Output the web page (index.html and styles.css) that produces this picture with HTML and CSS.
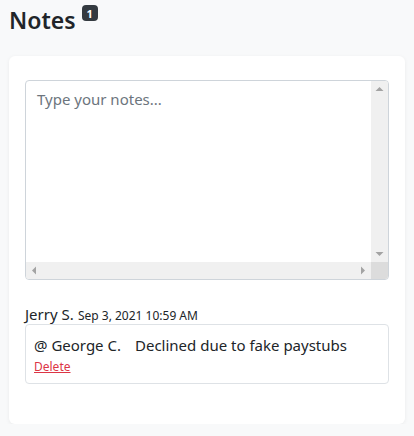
FILE: index.html
```html
<!DOCTYPE html>
<html lang="en">
<head>
<meta charset="utf-8">
<title>Notes</title>
<link rel="stylesheet" href="styles.css">
</head>
<body>
  <div class="page">
    <h4 class="title">Notes <span class="badge">1</span></h4>
    <div class="card">
      <div class="input-frame">
        <textarea class="notes-input" placeholder="Type your notes..."></textarea>
        <div class="vbar">
          <svg class="arrow" width="17" height="17" viewBox="0 0 17 17"><path d="M4.5 10L8.5 6L12.5 10Z" fill="#a3a3a3"/></svg>
          <svg class="arrow" width="17" height="17" viewBox="0 0 17 17"><path d="M4.5 7L8.5 11L12.5 7Z" fill="#a3a3a3"/></svg>
        </div>
        <div class="hbar">
          <svg class="arrow" width="17" height="17" viewBox="0 0 17 17"><path d="M10 4.5L6 8.5L10 12.5Z" fill="#a3a3a3"/></svg>
          <svg class="arrow" width="17" height="17" viewBox="0 0 17 17"><path d="M7 4.5L11 8.5L7 12.5Z" fill="#a3a3a3"/></svg>
        </div>
        <div class="corner"></div>
      </div>
      <div class="note">
        <div class="note-head"><span class="author">Jerry S.</span> <span class="date">Sep 3, 2021 10:59 AM</span></div>
        <div class="note-box">
          <div class="note-text"><span class="mention">@ George C.</span><span>Declined due to fake paystubs</span></div>
          <a class="delete" href="#">Delete</a>
        </div>
      </div>
    </div>
  </div>
</body>
</html>
```
FILE: styles.css
```css
html, body {
  margin: 0;
  padding: 0;
  background: #f8f9fa;
  font-family: "Noto Sans", "Open Sans", sans-serif;
  color: #212529;
}
.page {
  padding: 0 9px;
}
.title {
  margin: 0;
  padding-top: 6px;
  height: 56px;
  box-sizing: border-box;
  font-size: 23px;
  font-weight: 600;
  line-height: 28px;
  color: #212529;
  display: flex;
  align-items: flex-start;
  gap: 6px;
}
.badge {
  display: inline-flex;
  align-items: center;
  justify-content: center;
  width: 16px;
  height: 16px;
  margin-top: -1px;
  background: #343a40;
  color: #fff;
  border-radius: 4px;
  font-size: 11px;
  font-weight: 700;
  line-height: 1;
}
.card {
  background: #fff;
  border-radius: 6px;
  box-shadow: 0 1px 4px rgba(0,0,0,0.06);
  padding: 24px 16px 40px 16px;
}
.input-frame {
  display: grid;
  grid-template-columns: 1fr 17px;
  grid-template-rows: 1fr 17px;
  height: 200px;
  box-sizing: border-box;
  border: 1px solid #ced4da;
  border-radius: 4px;
  overflow: hidden;
  background: #fff;
}
.notes-input {
  display: block;
  width: 100%;
  height: 100%;
  box-sizing: border-box;
  margin: 0;
  border: 0;
  outline: none;
  padding: 6px 11px;
  font-family: inherit;
  font-size: 15px;
  line-height: 24px;
  color: #495057;
  resize: none;
  overflow: hidden;
  background: transparent;
}
.notes-input::placeholder {
  color: #6c757d;
}
.vbar {
  background: #f0f0f0;
  display: flex;
  flex-direction: column;
  justify-content: space-between;
}
.hbar {
  background: #f0f0f0;
  display: flex;
  justify-content: space-between;
}
.corner {
  background: #dcdcdc;
}
.arrow {
  display: block;
}
.note {
  margin-top: 24px;
}
.note-head {
  height: 20px;
  line-height: 20px;
  white-space: nowrap;
}
.author {
  font-size: 15px;
  line-height: 20px;
}
.date {
  font-size: 12px;
  line-height: 1;
}
.note-box {
  border: 1px solid #dee2e6;
  border-radius: 4px;
  padding: 8px 8px 6px 8px;
}
.note-text {
  font-size: 15px;
  line-height: 24px;
  display: flex;
  gap: 14px;
}
.delete {
  display: block;
  width: fit-content;
  font-size: 12px;
  line-height: 20px;
  color: #dc3545;
  text-decoration: underline;
}
```
